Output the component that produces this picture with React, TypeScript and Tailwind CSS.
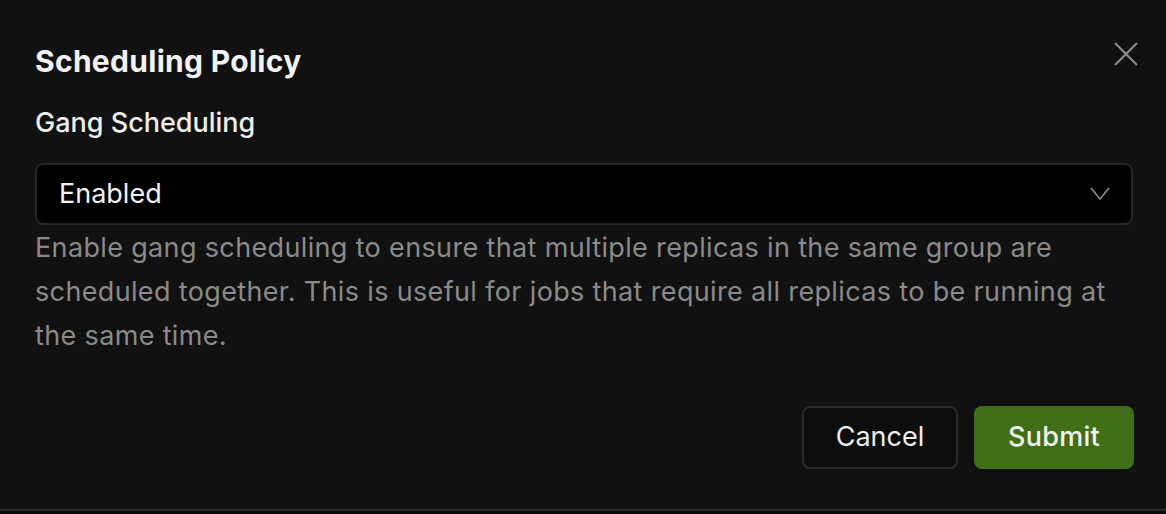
export default function App() {
  return (
    <div className="w-[1166px] h-[514px] bg-[#111111] flex flex-col font-['Inter',sans-serif] overflow-hidden">
      <div className="h-[509px] flex flex-col pl-[35px] pr-[33px] relative">
        <button
          aria-label="Close"
          className="absolute right-[28px] top-[42px] w-[24px] h-[24px] text-[#8c8c8c]"
        >
          <svg viewBox="0 0 24 24" width="24" height="24" fill="none" stroke="currentColor" strokeWidth="2">
            <path d="M1 1L23 23M23 1L1 23" />
          </svg>
        </button>

        <h2 className="mt-[43px] text-[30px] leading-[36px] font-bold tracking-[0.3px] text-[#f2f2f2]">
          Scheduling Policy
        </h2>

        <label className="mt-[28px] text-[27px] leading-[32px] font-medium text-[#eeeeee]">Gang Scheduling</label>

        <div className="mt-[24px] h-[62px] rounded-[8px] border-2 border-[#262626] bg-black flex items-center justify-between pl-[22px] pr-[21px]">
          <span className="text-[27px] text-[#f2f2f2]">Enabled</span>
          <svg viewBox="0 0 20 14" width="20" height="14" fill="none" stroke="#8c8c8c" strokeWidth="1.6">
            <path d="M1 1L10 12L19 1" />
          </svg>
        </div>

        <p className="mt-[1px] text-[27px] leading-[44px] tracking-[0.35px] text-[#8a8a8a]">
          Enable gang scheduling to ensure that multiple replicas in the same group are scheduled together. This is
          useful for jobs that require all replicas to be running at the same time.
        </p>

        <div className="mt-[48px] -mr-[1px] flex justify-end gap-[16px]">
          <button className="w-[156px] h-[63px] rounded-[8px] border-2 border-[#2a2a2a] bg-[#0d0d0d] text-[27px] text-[#eeeeee]">
            Cancel
          </button>
          <button className="w-[160px] h-[63px] rounded-[8px] bg-[#3f6f16] text-[27px] font-medium tracking-[0.3px] text-[#f4f4f4]">
            Submit
          </button>
        </div>
      </div>
      <div className="h-[2px] bg-[#2b2b2b]" />
      <div className="flex-1 bg-[#0b0b0b]" />
    </div>
  );
}
